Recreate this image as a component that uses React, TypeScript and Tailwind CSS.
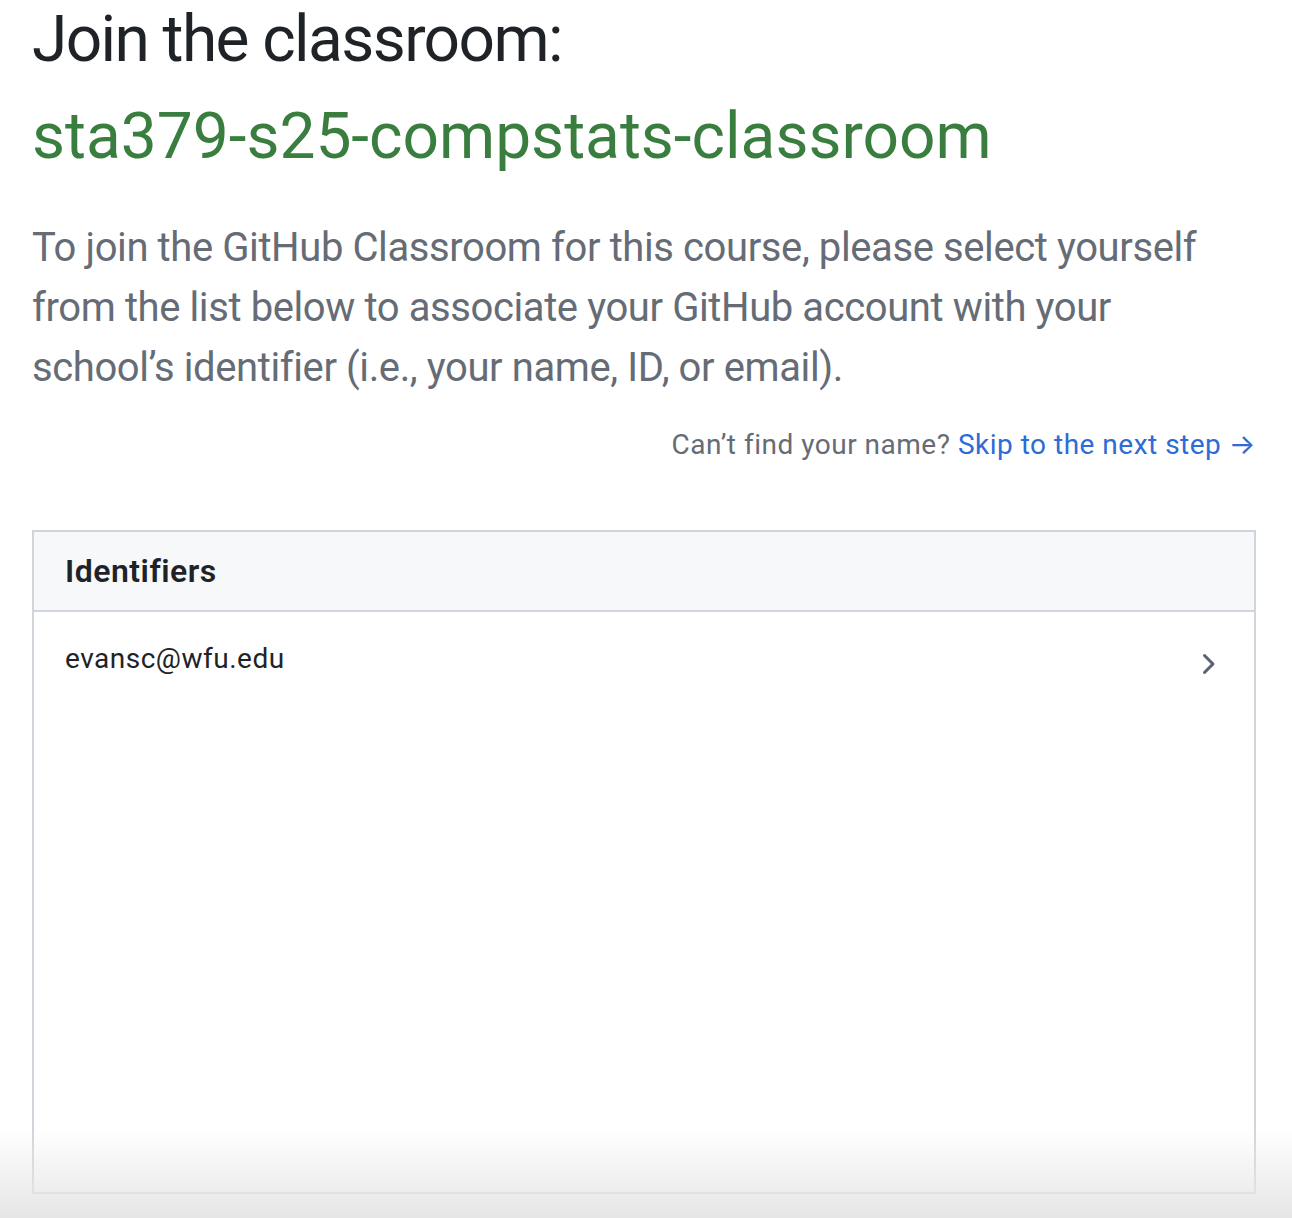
import React from 'react';

// GitHub Classroom "join roster" step, scaled 2x like the reference capture
const identifiers = ['evansc@wfu.edu'];

const ChevronRight = () => (
  <svg width="32" height="32" viewBox="0 0 16 16" fill="#59636e" aria-hidden="true">
    <path d="M6.22 3.22a.75.75 0 0 1 1.06 0l4.25 4.25a.75.75 0 0 1 0 1.06l-4.25 4.25a.751.751 0 0 1-1.042-.018.751.751 0 0 1-.018-1.042L9.94 8 6.22 4.28a.75.75 0 0 1 0-1.06Z" />
  </svg>
);

export default function App() {
  return (
    <div
      className="relative h-[1218px] overflow-hidden bg-white"
      style={{ fontFamily: 'Roboto, Inter, "Liberation Sans", sans-serif' }}
    >
      <div className="pl-[32px] pr-[36px]">
        {/* Title */}
        <h1 className="text-[64px] leading-[80px] font-normal text-[#1f2328] tracking-[-1.6px]">
          Join the classroom:
        </h1>
        <h2 className="mt-[17px] text-[64px] leading-[80px] font-normal text-[#3a7e3f]">
          sta379-s25-compstats-classroom
        </h2>

        {/* Intro */}
        <p className="mt-[41px] text-[40px] leading-[60px] text-[#656c76] tracking-[-0.4px]">
          To join the GitHub Classroom for this course, please select yourself from the list below to associate your
          GitHub account with your school’s identifier (i.e., your name, ID, or email).
        </p>

        <div className="mt-[26px] flex justify-end text-[28px] leading-[42px] tracking-[0.5px]">
          <span className="text-[#656c76]">Can’t find your name?&nbsp;</span>
          <a className="text-[#2d6bd6]" href="#">
            Skip to the next step →
          </a>
        </div>

        {/* Identifier list */}
        <div className="mt-[64px] h-[664px] border-2 border-[#d1d5db] flex flex-col">
          <div className="h-[80px] shrink-0 flex items-center px-[31px] bg-[#f6f8fa] border-b-2 border-[#d1d5db]">
            <span className="text-[32px] font-semibold text-[#1f2328] tracking-[0.5px]">Identifiers</span>
          </div>
          {identifiers.map((id) => (
            <div key={id} className="flex items-start justify-between pl-[31px] pr-[31px] pt-[27px] pb-[18px]">
              <span className="text-[28px] leading-[40px] text-[#1f2328] tracking-[0.5px]">{id}</span>
              <span className="mt-[9px]">
                <ChevronRight />
              </span>
            </div>
          ))}
        </div>
      </div>

      {/* bottom fade from the browser chrome */}
      <div className="pointer-events-none absolute left-0 right-0 bottom-0 h-[90px] bg-gradient-to-b from-[#ffffff00] to-[#e6e6e6]" />
    </div>
  );
}
